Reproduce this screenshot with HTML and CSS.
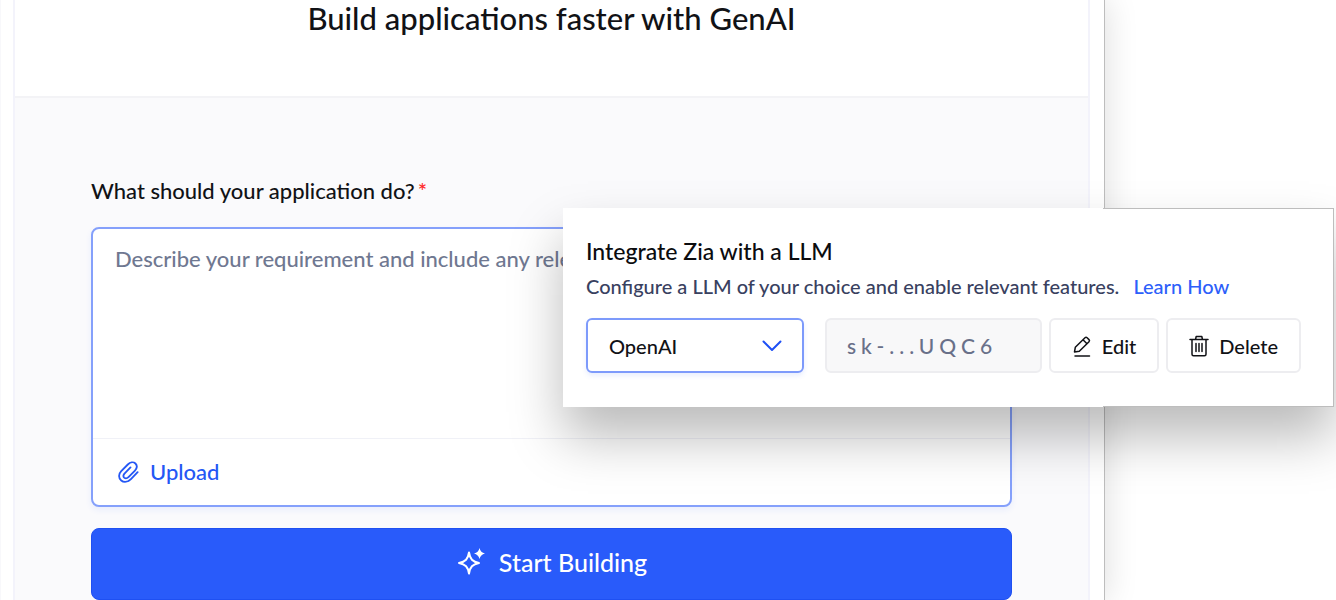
FILE: index.html
```html
<!DOCTYPE html>
<html lang="en">
<head>
<meta charset="utf-8">
<title>Build applications faster with GenAI</title>
<link rel="stylesheet" href="styles.css">
</head>
<body>
<main class="stage">
  <div class="window">
    <section class="panel">
      <header class="panel-header">
        <h1 class="title">Build applications faster with GenAI</h1>
      </header>
      <form class="builder">
        <label class="label" for="requirement">What should your application do?<span class="required">*</span></label>
        <div class="composer">
          <textarea class="requirement" id="requirement" placeholder="Describe your requirement and include any relevant details"></textarea>
          <div class="composer-footer">
            <button class="upload" type="button">
              <svg class="icon-clip" viewBox="0 0 24 24" aria-hidden="true"><path d="M22.500 12.200l-7.300 7.500c-3.200 3.200-7.500 4-10.600 1.500c-3.200-2.600-3-7 0-10.100l7.200-7.300c2.600-2.600 6-3.200 8.300-1.100c2.300 2.200 1.900 5.300-.5 7.700l-6.800 6.900c-1.700 1.700-3.700 2-5 .8c-1.300-1.300-1-3.100.6-4.700l6.300-6.400"/></svg>
              Upload
            </button>
          </div>
        </div>
        <button class="start" type="button">
          <svg class="icon-spark" viewBox="0 0 30 28" aria-hidden="true"><path class="spark-line" d="M13 4.500C14 11 16.500 13.700 23 15C16.500 16.300 14 19 13 25.500C12 19 9.500 16.300 3 15C9.500 13.700 12 11 13 4.500Z"/><path class="spark-fill" d="M23.500 0Q24.500 4.500 29 5.500Q24.500 6.500 23.500 11Q22.500 6.500 18 5.500Q22.500 4.500 23.500 0Z"/></svg>
          Start Building
        </button>
      </form>
    </section>
  </div>

  <aside class="dialog" aria-labelledby="dialog-title">
    <h2 class="dialog-title" id="dialog-title">Integrate Zia with a LLM</h2>
    <p class="dialog-text">Configure a LLM of your choice and enable relevant features. <a class="link" href="#">Learn How</a></p>
    <div class="controls">
      <div class="select-wrap">
        <select class="provider" aria-label="Provider"><option>OpenAI</option></select>
        <svg class="icon-chevron" viewBox="0 0 20 12" aria-hidden="true"><path d="M1.500 1.500l8.500 8.500 8.500-8.500"/></svg>
      </div>
      <input class="key" type="text" aria-label="API key" value="sk-...UQC6" readonly>
      <button class="action" type="button">
        <svg class="icon-action" viewBox="0 0 20 22" aria-hidden="true"><path d="M3 21h14.500M2.500 17l.8-4.700L13 2.700a1.500 1.500 0 0 1 2.100 0l1.900 1.900a1.500 1.500 0 0 1 0 2.100L7.300 16.300zM11 4.700l4 4"/></svg>
        Edit
      </button>
      <button class="action" type="button">
        <svg class="icon-action" viewBox="0 0 20 22" aria-hidden="true"><path d="M1 4.500h18M6.500 4.500l.7-3h5.600l.7 3M3 4.500v14.800a1.500 1.500 0 0 0 1.500 1.500h11a1.500 1.500 0 0 0 1.500-1.500V4.500M7 8.500v8M10 8.500v8M13 8.500v8"/></svg>
        Delete
      </button>
    </div>
  </aside>
</main>
</body>
</html>
```
FILE: styles.css
```css
* { box-sizing: border-box; }

body {
  margin: 0;
  background: #fff;
  color: #111216;
  font-family: Lato, "Liberation Sans", sans-serif;
  font-size: 22px;
  font-weight: 500;
  line-height: 28px;
}

button, input, select, textarea {
  margin: 0;
  font: inherit;
  color: inherit;
}

svg {
  fill: none;
  stroke: currentColor;
  stroke-linecap: round;
  stroke-linejoin: round;
}

.stage {
  position: relative;
  min-height: 100vh;
  overflow: hidden;
}

.window {
  margin-right: 231px;
  padding: 0 14px 0 12px;
  min-height: 100vh;
  border-left: 1px solid #f8f8fb;
  border-right: 1px solid #bdbdbd;
  background: #fff;
  box-shadow: 0 0 32px rgba(0, 0, 0, 0.14);
}

.panel {
  border: solid #f3f3fb;
  border-width: 0 2px;
  background: #fafafc;
}

.panel-header {
  padding-bottom: 60px;
  border-bottom: 2px solid #f3f3f6;
  background: #fff;
}

.title {
  margin: 0;
  font-size: 31px;
  font-weight: 500;
  line-height: 36px;
  text-align: center;
}

.builder {
  display: flex;
  flex-direction: column;
  padding: 79px 76px 0;
  min-height: calc(100vh - 98px);
}

.label { margin-bottom: 22px; }

.required {
  margin-left: 3px;
  color: #ff2a2a;
}

.composer {
  border: 2px solid #85a0fb;
  border-radius: 8px;
  background: #fff;
  box-shadow: 0 3px 6px rgba(40, 90, 250, 0.08);
}

.requirement {
  display: block;
  width: 100%;
  height: 209px;
  padding: 16px 22px;
  border: 0;
  border-radius: 8px;
  outline: 0;
  background: none;
  resize: none;
}

.requirement::placeholder {
  color: #6f7891;
  opacity: 1;
}

.composer-footer {
  padding: 19px 24px;
  border-top: 1px solid #f0f1f7;
}

.upload {
  display: flex;
  align-items: center;
  gap: 11px;
  padding: 0;
  border: 0;
  background: none;
  color: #2457f5;
}

.icon-clip {
  width: 22px;
  height: 22px;
  stroke-width: 2;
}

.start {
  display: flex;
  align-items: center;
  justify-content: center;
  gap: 13px;
  height: 72px;
  margin-top: 21px;
  padding-bottom: 5px;
  border: 1px solid #1f50f2;
  border-radius: 8px;
  background: #295bfa;
  color: #fff;
  font-size: 25px;
}

.icon-spark {
  width: 30px;
  height: 28px;
}

.spark-line { stroke-width: 2; }

.spark-fill {
  fill: currentColor;
  stroke: none;
}

.dialog {
  position: absolute;
  top: 208px;
  right: 2px;
  width: 771px;
  padding: 28px 33px 34px 23px;
  background: #fff;
  box-shadow: 0 30px 50px rgba(0, 0, 0, 0.27);
}

/* Outline on the part of the dialog that overhangs the window */
.dialog::after {
  content: "";
  position: absolute;
  inset: 0 0 0 auto;
  width: 230px;
  border: solid #bdbdbd;
  border-width: 1px 1px 1px 0;
  pointer-events: none;
}

.dialog-title {
  margin: 0;
  color: #0b0c0f;
  font-size: 23px;
  font-weight: 500;
  line-height: 30px;
}

.dialog-text {
  margin: 6px 0 18px;
  color: #39415f;
  font-size: 20px;
}

.link {
  margin-left: 9px;
  color: #2d5ffa;
  text-decoration: none;
}

.controls {
  display: flex;
  gap: 7px;
}

.select-wrap {
  display: grid;
  align-items: center;
  width: 218px;
  margin-right: 14px;
}

.provider, .icon-chevron { grid-area: 1 / 1; }

.provider {
  width: 100%;
  height: 55px;
  padding: 0 21px;
  border: 2px solid #7d9afb;
  border-radius: 6px;
  outline: 0;
  appearance: none;
  background: #fff;
  box-shadow: 0 3px 5px rgba(40, 90, 250, 0.1);
  font-size: 20px;
}

.icon-chevron {
  justify-self: end;
  width: 20px;
  height: 12px;
  margin-right: 22px;
  color: #1f50f5;
  stroke-width: 2;
  pointer-events: none;
}

.key, .action {
  height: 55px;
  border: 2px solid #ededf0;
  border-radius: 6px;
}

.key {
  flex: 1;
  min-width: 0;
  padding: 0 20px;
  outline: 0;
  background: #f8f8f9;
  color: #697089;
  font-size: 21px;
  letter-spacing: 5px;
}

.action {
  display: flex;
  align-items: center;
  gap: 10px;
  padding: 0 21px;
  background: #fff;
  font-size: 20px;
}

.icon-action {
  width: 20px;
  height: 22px;
  stroke-width: 1.5;
}
```
